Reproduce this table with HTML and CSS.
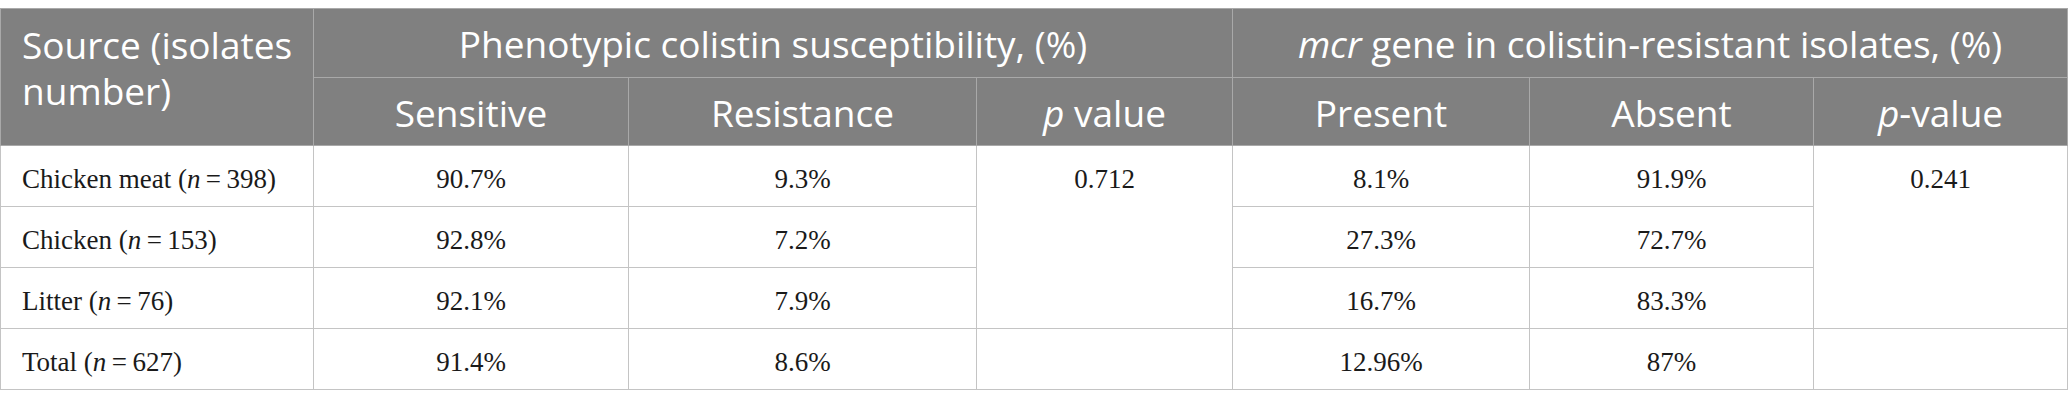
FILE: index.html
```html
<!DOCTYPE html>
<html lang="en">
<head>
<meta charset="utf-8">
<title>Colistin susceptibility table</title>
<link rel="stylesheet" href="styles.css">
</head>
<body>
<table class="data-table">
  <colgroup>
    <col class="c1"><col class="c2"><col class="c3"><col class="c4"><col class="c5"><col class="c6"><col class="c7">
  </colgroup>
  <thead>
    <tr class="hrow1">
      <th rowspan="2" class="hsource">Source (isolates number)</th>
      <th colspan="3">Phenotypic colistin susceptibility, (%)</th>
      <th colspan="3"><i>mcr</i> gene in colistin-resistant isolates, (%)</th>
    </tr>
    <tr class="hrow2">
      <th>Sensitive</th>
      <th>Resistance</th>
      <th><i>p</i> value</th>
      <th>Present</th>
      <th>Absent</th>
      <th><i>p</i>-value</th>
    </tr>
  </thead>
  <tbody>
    <tr class="brow">
      <td class="src">Chicken meat (<i>n</i>&#8201;=&#8201;398)</td>
      <td>90.7%</td>
      <td>9.3%</td>
      <td rowspan="3">0.712</td>
      <td>8.1%</td>
      <td>91.9%</td>
      <td rowspan="3">0.241</td>
    </tr>
    <tr class="brow">
      <td class="src">Chicken (<i>n</i>&#8201;=&#8201;153)</td>
      <td>92.8%</td>
      <td>7.2%</td>
      <td>27.3%</td>
      <td>72.7%</td>
    </tr>
    <tr class="brow">
      <td class="src">Litter (<i>n</i>&#8201;=&#8201;76)</td>
      <td>92.1%</td>
      <td>7.9%</td>
      <td>16.7%</td>
      <td>83.3%</td>
    </tr>
    <tr class="brow">
      <td class="src">Total (<i>n</i>&#8201;=&#8201;627)</td>
      <td>91.4%</td>
      <td>8.6%</td>
      <td></td>
      <td>12.96%</td>
      <td>87%</td>
      <td></td>
    </tr>
  </tbody>
</table>
</body>
</html>
```

FILE: styles.css
```css
html, body {
  margin: 0;
  padding: 0;
  background: #ffffff;
}
body {
  padding-top: 8px;
}
.data-table {
  border-collapse: collapse;
  table-layout: fixed;
  width: 2067px;
  border: 1px solid #c4c4c4;
}
.c1 { width: 313px; }
.c2 { width: 315px; }
.c3 { width: 348px; }
.c4 { width: 256px; }
.c5 { width: 297px; }
.c6 { width: 284px; }
.c7 { width: 254px; }

.data-table th {
  background: #808080;
  color: #ffffff;
  font-family: "Open Sans", "Noto Sans", sans-serif;
  font-weight: 400;
  font-size: 37px;
  line-height: 46px;
  text-align: center;
  vertical-align: middle;
  border: 1px solid #a9a9a9;
  padding: 2px 8px 0;
}
.hrow1 { height: 69px; }
.hrow2 { height: 68px; }
.data-table th.hsource {
  text-align: left;
  vertical-align: top;
  padding: 13px 6px 0 21px;
}
.data-table td {
  font-family: "Liberation Serif", "Times New Roman", serif;
  font-size: 27px;
  line-height: 32px;
  color: #1a1a1a;
  text-align: center;
  vertical-align: top;
  border: 1px solid #c4c4c4;
  padding: 17px 10px 0;
}
.brow { height: 61px; }
.data-table td.src {
  text-align: left;
  padding-left: 21px;
}
```
